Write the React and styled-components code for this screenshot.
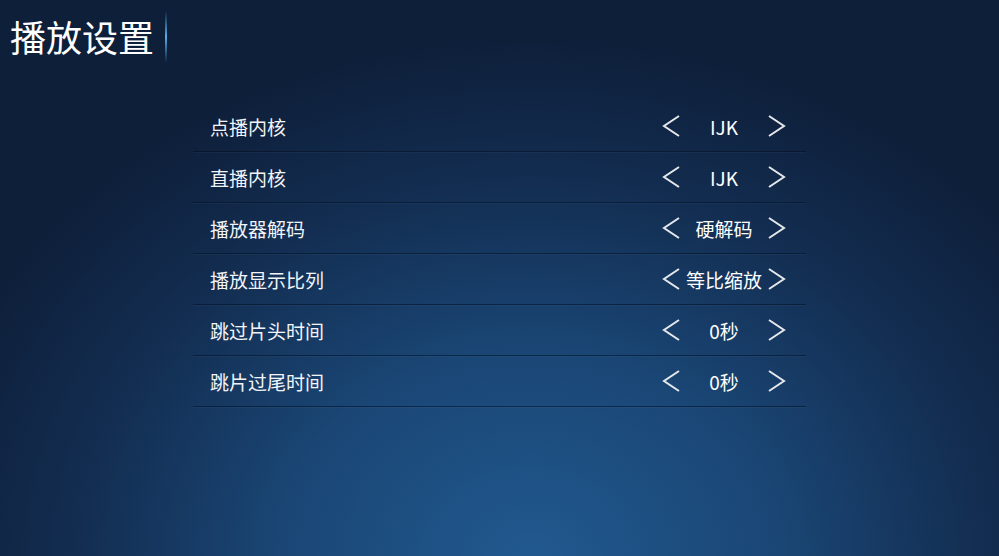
import React from 'react'
import styled, { createGlobalStyle } from 'styled-components'

const GlobalStyle = createGlobalStyle`
  html, body {
    margin: 0;
    padding: 0;
    height: 100%;
  }
  body {
    font-family: "Noto Sans CJK SC", "Noto Sans", sans-serif;
    background: #0d1d37;
    overflow: hidden;
  }
`

const Screen = styled.div`
  width: 999px;
  height: 556px;
  background:
    radial-gradient(ellipse 620px 520px at 530px 560px, #21598f 0%, #1a4675 40%, #132e52 72%, #0e1f3a 100%);
  color: #f4f6fa;
`

const Header = styled.header`
  height: 72px;
  display: flex;
  align-items: center;
  padding-left: 10px;
  gap: 11px;
`

const Title = styled.h1`
  margin: 0;
  font-size: 36px;
  font-weight: 400;
  line-height: 1;
  color: #ffffff;
`

const TitleBar = styled.span`
  width: 2px;
  height: 52px;
  margin-top: 1px;
  background: linear-gradient(to bottom, rgba(74, 160, 224, 0) 0%, #57aee8 50%, rgba(74, 160, 224, 0) 100%);
`

const List = styled.div`
  width: 613px;
  margin: 29px auto 0;
  display: flex;
  flex-direction: column;
`

const Row = styled.div`
  height: 50px;
  display: flex;
  align-items: center;
  justify-content: space-between;
  padding: 0 20px 0 17px;
  border-bottom: 1px solid rgba(4, 14, 32, 0.55);
  box-shadow: 0 1px 0 rgba(120, 170, 220, 0.06);
`

const Label = styled.span`
  font-size: 19px;
  line-height: 1;
  color: #f2f4f8;
`

const Control = styled.div`
  display: flex;
  align-items: center;
`

const Arrow = styled.button`
  width: 18px;
  height: 24px;
  padding: 0;
  border: 0;
  background: none;
  display: flex;
  align-items: center;
  justify-content: center;
  cursor: pointer;
`

const Value = styled.span`
  width: 88px;
  text-align: center;
  font-size: 19px;
  line-height: 1;
  color: #ffffff;
`

const Chevron = ({ dir }) => (
  <svg width="18" height="24" viewBox="0 0 18 24">
    <polyline
      points={dir === 'left' ? '17,2 2,12 17,22' : '1,2 16,12 1,22'}
      fill="none"
      stroke="#e6e8ec"
      strokeWidth="2"
    />
  </svg>
)

const settings = [
  { label: '点播内核', value: 'IJK' },
  { label: '直播内核', value: 'IJK' },
  { label: '播放器解码', value: '硬解码' },
  { label: '播放显示比列', value: '等比缩放' },
  { label: '跳过片头时间', value: '0秒' },
  { label: '跳片过尾时间', value: '0秒' },
]

const App = () => (
  <>
    <GlobalStyle />
    <Screen>
      <Header>
        <Title>播放设置</Title>
        <TitleBar />
      </Header>
      <List>
        {settings.map((item) => (
          <Row key={item.label}>
            <Label>{item.label}</Label>
            <Control>
              <Arrow aria-label="上一个">
                <Chevron dir="left" />
              </Arrow>
              <Value>{item.value}</Value>
              <Arrow aria-label="下一个">
                <Chevron dir="right" />
              </Arrow>
            </Control>
          </Row>
        ))}
      </List>
    </Screen>
  </>
)

export default App
